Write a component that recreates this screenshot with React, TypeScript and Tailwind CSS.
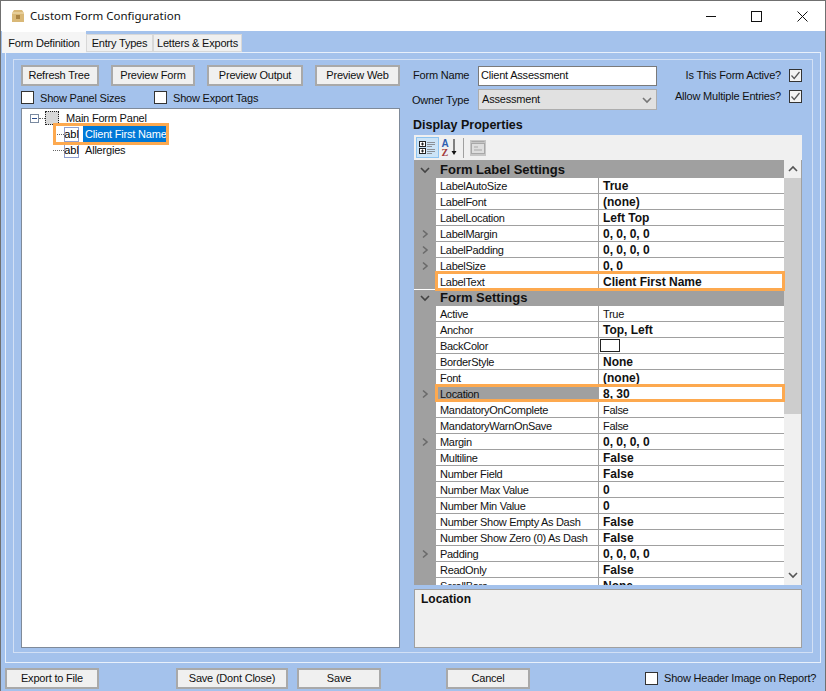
const uiFont = "font-['Liberation_Sans',Arial,sans-serif]";

type Row = {
  name: string;
  value?: string;
  bold?: boolean;
  chevron?: boolean;
  category?: boolean;
  selected?: boolean;
  swatch?: boolean;
  whiteEdge?: boolean;
};

const rows: Row[] = [
  { name: 'Form Label Settings', category: true },
  { name: 'LabelAutoSize', value: 'True', bold: true },
  { name: 'LabelFont', value: '(none)', bold: true },
  { name: 'LabelLocation', value: 'Left Top', bold: true },
  { name: 'LabelMargin', value: '0, 0, 0, 0', bold: true, chevron: true },
  { name: 'LabelPadding', value: '0, 0, 0, 0', bold: true, chevron: true },
  { name: 'LabelSize', value: '0, 0', bold: true, chevron: true },
  { name: 'LabelText', value: 'Client First Name', bold: true, whiteEdge: true },
  { name: 'Form Settings', category: true },
  { name: 'Active', value: 'True' },
  { name: 'Anchor', value: 'Top, Left', bold: true },
  { name: 'BackColor', swatch: true },
  { name: 'BorderStyle', value: 'None', bold: true },
  { name: 'Font', value: '(none)', bold: true },
  { name: 'Location', value: '8, 30', bold: true, chevron: true, selected: true },
  { name: 'MandatoryOnComplete', value: 'False' },
  { name: 'MandatoryWarnOnSave', value: 'False' },
  { name: 'Margin', value: '0, 0, 0, 0', bold: true, chevron: true },
  { name: 'Multiline', value: 'False', bold: true },
  { name: 'Number Field', value: 'False', bold: true },
  { name: 'Number Max Value', value: '0', bold: true },
  { name: 'Number Min Value', value: '0', bold: true },
  { name: 'Number Show Empty As Dash', value: 'False', bold: true },
  { name: 'Number Show Zero (0) As Dash', value: 'False', bold: true },
  { name: 'Padding', value: '0, 0, 0, 0', bold: true, chevron: true },
  { name: 'ReadOnly', value: 'False', bold: true },
  { name: 'ScrollBars', value: 'None', bold: true },
];

function Chevron({ dir, color = '#666666' }: { dir: 'right' | 'down' | 'up'; color?: string }) {
  const d = dir === 'right' ? 'M3 1.5 L7 5 L3 8.5' : dir === 'down' ? 'M1 3 L5 7 L9 3' : 'M1 7 L5 3 L9 7';
  return (
    <svg width="10" height="10" viewBox="0 0 10 10" fill="none">
      <path d={d} stroke={color} strokeWidth="1.6" />
    </svg>
  );
}

function WinButton({ label, className }: { label: string; className: string }) {
  return (
    <button className={`flex items-center justify-center shrink-0 whitespace-nowrap h-[21px] border-2 border-[#a9a9a9] bg-[#f0f0f0] text-[11px] tracking-[-0.2px] text-[#111] ${className}`}>
      {label}
    </button>
  );
}

function Check({ checked = false, className = '' }: { checked?: boolean; className?: string }) {
  return (
    <span className={`flex items-center justify-center w-[13px] h-[13px] shrink-0 border border-[#333] ${checked ? 'bg-[#f3f3f3]' : 'bg-white'} ${className}`}>
      {checked && (
        <svg width="11" height="11" viewBox="0 0 11 11" fill="none">
          <path d="M1.5 5.5 L4.2 8.5 L9.5 2" stroke="#555" strokeWidth="1.2" />
        </svg>
      )}
    </span>
  );
}

function AblIcon() {
  return (
    <span className="flex items-center justify-center w-[15px] h-[15px] shrink-0 border border-[#8f9fd0] bg-white text-[11px] tracking-normal leading-none text-black">
      abl
    </span>
  );
}

function Dots({ className }: { className: string }) {
  return <span className={`border-t border-dotted border-[#666] ${className}`} />;
}

function PropertyRow({ row }: { row: Row }) {
  if (row.category) {
    return (
      <div className="flex items-center h-[16px] shrink-0 bg-[#a0a0a0] font-bold text-[13px] tracking-normal text-[#111]">
        <span className="flex items-center justify-center w-[22px]">
          <Chevron dir="down" color="#444444" />
        </span>
        <span className="pl-[4px]">{row.name}</span>
      </div>
    );
  }
  const spaced = row.value?.startsWith('0,');
  return (
    <div className="flex h-[16px] shrink-0 text-[11px] tracking-[-0.3px] leading-[17px] text-[#111]">
      <span className={`flex items-center justify-center w-[22px] shrink-0 bg-[#a0a0a0] border-b ${row.whiteEdge ? 'border-white' : 'border-[#a0a0a0]'}`}>
        {row.chevron && <Chevron dir="right" color="#6a6a6a" />}
      </span>
      <span className={`w-[163px] shrink-0 pl-[4px] border-b border-r border-[#a0a0a0] whitespace-nowrap overflow-hidden ${row.selected ? 'bg-[#a0a0a0]' : 'bg-white'}`}>
        {row.name}
      </span>
      <span className={`flex-1 pl-[4px] bg-white border-b border-[#a0a0a0] whitespace-nowrap overflow-hidden ${row.bold ? 'font-bold text-[12px] tracking-normal' : ''} ${spaced ? 'tracking-[0.7px]' : ''}`}>
        {row.swatch ? <span className="block mt-[1px] -ml-[3px] w-[20px] h-[13px] border border-[#222] bg-white" /> : row.value}
      </span>
    </div>
  );
}

export default function App() {
  return (
    <div className={`${uiFont} relative flex flex-col w-[826px] h-[691px] overflow-hidden bg-[#a4c2ec] border-x border-t border-[#707070] text-[11px] tracking-[-0.2px] text-[#111]`}>
      {/* Title bar */}
      <div className="flex items-center h-[30px] shrink-0 bg-white">
        <svg className="ml-[10px]" width="14" height="14" viewBox="0 0 14 14">
          <path d="M1 4 L3 1 H11 L13 4 V13 H1 Z" fill="#d9b877" />
          <path d="M1 4 H13" stroke="#f3e3bd" strokeWidth="1" />
          <rect x="5" y="6" width="4" height="4" fill="#a98344" />
        </svg>
        <span className="ml-[5px] font-['Noto_Sans',sans-serif] text-[11.5px] tracking-normal text-[#111]">Custom Form Configuration</span>
        <div className="flex items-center ml-auto">
          <svg width="11" height="11" viewBox="0 0 11 11" fill="none" className="mr-[34px]">
            <path d="M0 5.5 H10" stroke="#111" />
          </svg>
          <svg width="11" height="11" viewBox="0 0 11 11" fill="none" className="mr-[35px]">
            <rect x="0.5" y="0.5" width="10" height="10" stroke="#111" />
          </svg>
          <svg width="11" height="11" viewBox="0 0 11 11" fill="none" className="mr-[17px]">
            <path d="M0.5 0.5 L10.5 10.5 M10.5 0.5 L0.5 10.5" stroke="#111" />
          </svg>
        </div>
      </div>

      {/* Tabs */}
      <div className="relative z-10 flex items-end h-[21px] shrink-0 pl-[1px] whitespace-nowrap">
        <div className="flex items-start justify-center w-[84px] h-[22px] -mb-[1px] pt-[3px] bg-[#f5f5f5] border-t border-white">Form Definition</div>
        <div className="flex items-center justify-center w-[67px] h-[18px] bg-[#f0f0f0] border border-[#d8d8d8]">Entry Types</div>
        <div className="flex items-center justify-end pr-[3px] w-[89px] h-[18px] bg-[#f0f0f0] border border-[#d8d8d8]">Letters &amp; Exports</div>
      </div>

      {/* Tab page */}
      <div className="mx-[4px] h-[611px] shrink-0 border border-[#e8f0fb] pt-[6px] px-[7px]">
        <div className="flex h-[594px] border border-[#d2e0f5]">
          {/* Left column */}
          <div className="flex flex-col w-[386px] shrink-0 pl-[7px] pt-[5px]">
            <div className="flex gap-[12px] h-[21px]">
              <WinButton label="Refresh Tree" className="w-[78px] pr-[2px]" />
              <WinButton label="Preview Form" className="w-[84px]" />
              <WinButton label="Preview Output" className="w-[96px]" />
              <WinButton label="Preview Web" className="w-[85px]" />
            </div>
            <div className="flex items-center h-[13px] mt-[5px]">
              <Check />
              <span className="ml-[6px] w-[114px] pt-[1px]">Show Panel Sizes</span>
              <Check />
              <span className="ml-[6px] pt-[1px]">Show Export Tags</span>
            </div>
            <div className="mt-[4px] w-[379px] h-[540px] border border-[#7f8a99] bg-white pt-[1px]">
              <div className="flex items-center h-[16px] pl-[8px]">
                <span className="flex items-center justify-center w-[9px] h-[9px] border border-[#7a8aa0] bg-white">
                  <span className="w-[5px] h-[1px] bg-[#2b4c8c]" />
                </span>
                <Dots className="w-[6px]" />
                <span className="w-[14px] h-[14px] border border-dotted border-[#222] bg-[#d8d8d8]" />
                <span className="ml-[7px]">Main Form Panel</span>
              </div>
              <div className="flex items-center h-[16px] pl-[35px]">
                <Dots className="w-[7px]" />
                <AblIcon />
                <span className="ml-[4px] h-[16px] px-[2px] bg-[#0078d7] text-white leading-[16px] whitespace-nowrap">Client First Name</span>
              </div>
              <div className="flex items-center h-[16px] pl-[31px]">
                <Dots className="w-[11px]" />
                <AblIcon />
                <span className="ml-[6px]">Allergies</span>
              </div>
            </div>
          </div>

          {/* Right column */}
          <div className="flex flex-col w-[403px] shrink-0 pl-[13px] pt-[5px]">
            <div className="flex items-center h-[21px]">
              <span className="w-[65px] shrink-0">Form Name</span>
              <span className="w-[179px] h-[20px] pl-[2px] border border-[#7a7a7a] bg-white leading-[17px] shrink-0">Client Assessment</span>
              <span className="ml-auto whitespace-nowrap">Is This Form Active?</span>
              <Check checked className="ml-[8px] mr-[1px]" />
            </div>
            <div className="flex items-center h-[21px] mt-[3px]">
              <span className="w-[65px] shrink-0 -ml-[1px] mr-[1px] pt-[1px]">Owner Type</span>
              <span className="flex items-center w-[179px] h-[21px] pl-[3px] pr-[4px] border border-[#adadad] bg-[#e1e1e1] shrink-0">
                Assessment
                <span className="ml-auto"><Chevron dir="down" color="#777777" /></span>
              </span>
              <span className="ml-auto -mt-[6px] whitespace-nowrap">Allow Multiple Entries?</span>
              <Check checked className="ml-[8px] mr-[1px] -mt-[6px]" />
            </div>

            <div className="h-[25px] pt-[8px] font-bold text-[12.5px] tracking-normal leading-[14px]">Display Properties</div>

            <div className="ml-[1px] w-[388px] flex items-center h-[25px] bg-[#f0f0f0] shrink-0">
              <span className="flex items-center justify-center w-[23px] h-[21px] ml-[2px] bg-[#cce4f7] border border-[#8ec4f0]">
                <svg width="17" height="15" viewBox="0 0 17 15" fill="none">
                  <rect x="0.5" y="1.5" width="6" height="5" fill="#fff" stroke="#222" />
                  <rect x="0.5" y="8.5" width="6" height="5" fill="#fff" stroke="#222" />
                  <path d="M2 4 H5 M3.5 2.5 V5.5 M2 11 H5 M3.5 9.5 V12.5" stroke="#222" />
                  <path d="M8 2.5 H16 M8 4.5 H16 M8 6.5 H13 M8 9.5 H16 M8 11.5 H16 M8 13.5 H13" stroke="#8b9096" />
                </svg>
              </span>
              <svg className="ml-[2px]" width="18" height="19" viewBox="0 0 18 19" fill="none">
                <text x="0.5" y="8.5" fontSize="10" fontWeight="700" fontFamily="Liberation Sans" fill="#2f5fb0">A</text>
                <text x="0.5" y="18" fontSize="10" fontWeight="700" fontFamily="Liberation Serif" fill="#a33a3a">Z</text>
                <path d="M13 1 V15" stroke="#111" strokeWidth="1" />
                <path d="M10.5 13 H15.5 L13 17 Z" fill="#111" />
              </svg>
              <span className="ml-[4px] w-[1px] h-[20px] bg-[#a0a0a0]" />
              <svg className="ml-[6px]" width="16" height="16" viewBox="0 0 16 16" fill="none">
                <rect x="0" y="0" width="16" height="16" fill="#c6c6c6" />
                <rect x="1.5" y="3.5" width="13" height="10" fill="#dedede" stroke="#a8a8a8" />
                <path d="M1.5 1.5 H14.5 M4 7 H8 M4 10 H12" stroke="#a8a8a8" />
              </svg>
            </div>

            <div className="relative ml-[1px] flex w-[388px] h-[425px] shrink-0 overflow-hidden">
              <div className="flex flex-col w-[370px] shrink-0 overflow-hidden">
                {rows.map((row, i) => (
                  <div key={row.name} className={i === 0 ? 'pt-[2px] bg-[#a0a0a0]' : ''}>
                    <PropertyRow row={row} />
                  </div>
                ))}
              </div>
              <div className="flex flex-col flex-1 bg-[#f0f0f0] border-r border-[#a0a0a0]">
                <span className="flex items-center justify-center h-[18px]"><Chevron dir="up" color="#555555" /></span>
                <span className="h-[236px] bg-[#cdcdcd]" />
                <span className="flex items-center justify-center h-[18px] mt-auto mb-[1px]"><Chevron dir="down" color="#555555" /></span>
              </div>
              {/* Orange callouts */}
              <div className="absolute left-[21px] top-[111px] w-[350px] h-[20px] border-[3px] border-[#fda94f]" />
              <div className="absolute left-[21px] top-[224px] w-[350px] h-[18px] border-[3px] border-[#fda94f]" />
            </div>

            <div className="ml-[1px] mt-[4px] w-[388px] h-[59px] shrink-0 pl-[6px] border border-[#a0a0a0] bg-[#f0f0f0] font-bold text-[12px] tracking-normal">Location</div>
          </div>
        </div>
      </div>

      {/* Footer */}
      <div className="flex items-center flex-1 pl-[4px] pt-[3px]">
        <WinButton label="Export to File" className="w-[94px]" />
        <WinButton label="Save (Dont Close)" className="ml-[77px] w-[112px]" />
        <WinButton label="Save" className="ml-[9px] w-[84px]" />
        <WinButton label="Cancel" className="ml-[65px] w-[84px]" />
        <Check className="ml-[115px]" />
        <span className="ml-[6px] whitespace-nowrap">Show Header Image on Report?</span>
      </div>

      {/* Tree callout */}
      <div className="absolute left-[52px] top-[122px] w-[116px] h-[22px] border-[3px] border-[#fda94f]" />
    </div>
  );
}
